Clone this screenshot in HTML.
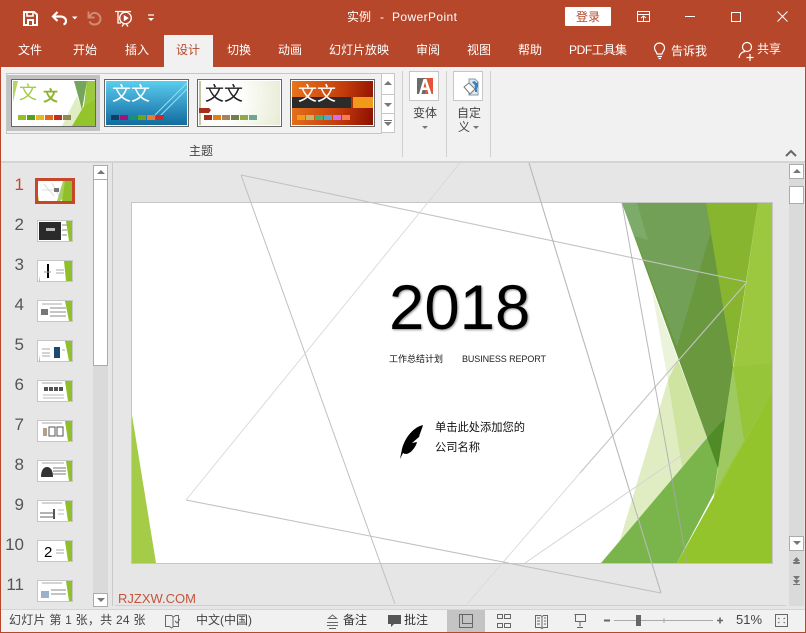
<!DOCTYPE html>
<html><head><meta charset="utf-8"><style>
html,body{margin:0;padding:0;width:806px;height:633px;overflow:hidden;background:#e6e6e6}
body{position:relative;font-family:"Liberation Sans","Noto Sans CJK SC",sans-serif;font-size:12px;color:#444}
div,span,svg{position:absolute}
.t{white-space:nowrap;line-height:16px;height:16px}
.w{color:#fff}
.n{font-size:17px;color:#555;line-height:20px;height:20px;width:24px;text-align:right;left:0}
.th{left:37px;width:34px;height:20px;background:#fff;border:1px solid #c6c6c6}
.g{top:79px;width:83px;height:46px;border:1px solid #666;overflow:hidden;box-shadow:inset 0 0 0 1px #fff}
.sw{height:5px;width:8px;top:115px}
.sb{background:#fff;border:1px solid #ababab;box-sizing:border-box}
.ar{width:0;height:0;border-left:4px solid transparent;border-right:4px solid transparent}
.gt{font-size:19px;line-height:24px;top:3px;left:7px;white-space:nowrap}
</style></head><body>
<div style="left:0;top:0;width:806px;height:67px;background:#b7472a"></div>
<div style="left:0;top:67px;width:806px;height:95px;background:#f1f1f1"></div>
<div style="left:0;top:161px;width:806px;height:2px;background:#d4d4d4"></div>
<div style="left:164px;top:35px;width:49px;height:32px;background:#f1f1f1"></div>

<svg style="left:0;top:0" width="170" height="34" fill="none" stroke="#fff">
<path d="M24 12h10l3 2.500V25H24z" stroke-width="2"/><path d="M27 12v4h6v-4" stroke-width="1.600"/><path d="M27 19h7v6h-7z" fill="#fff" stroke="none"/><path d="M29 21h3v4h-3z" fill="#b7472a" stroke="none"/>
<path d="M57.500 12l-4.500 4.500 4.500 4.500" stroke-width="2.200"/><path d="M53 16.500h7c4 0 6 2.200 6 4.500 0 1.800-1 3-2.500 3.500" stroke-width="2.200"/>
<path d="M72 16.500h5.500l-2.750 3z" fill="#fff" stroke="none"/>
<path d="M88.500 11.500v6h6" stroke="#d08a75" stroke-width="1.900" transform="translate(0,0)"/><path d="M89.500 17c1-3 3.500-4.500 6-4 3 .6 5 3 5 6 0 3-2.500 5.500-6 5.500-2 0-4-1-5-3" stroke="#d08a75" stroke-width="2"/>
<path d="M115 11.500h16M118 12v11h3M122 26.500l2-3M128 26.500l-2-3" stroke-width="1.300"/><circle cx="125.500" cy="18" r="5.800" stroke-width="1.300"/><path d="M123.800 15v6.200l5-3.100z" fill="#fff" stroke="none"/>
<path d="M148 15h6" stroke-width="1.200"/><path d="M148 18h6l-3 3z" fill="#fff" stroke="none"/>
</svg>
<span class="t w" style="left:347px;top:9px">实例</span><span class="t w" style="left:380px;top:9px">-</span><span class="t w" style="left:392px;top:9px;letter-spacing:.4px">PowerPoint</span>
<div style="left:565px;top:7px;width:46px;height:19px;background:#fff;border-radius:1px"></div>
<span class="t" style="left:576px;top:9px;color:#b7472a">登录</span>
<svg style="left:630px;top:5px" width="176" height="26" fill="none" stroke="#fff" stroke-width="1">
<path d="M7.500 6.500h12v10h-12zM7.500 9.500h12M13.500 16v-5M11 13l2.500-2 2.500 2"/>
<path d="M55 11.500h10"/><path d="M101.500 7.500h9v9h-9z"/><path d="M147.500 6.500l10 10M157.500 6.500l-10 10"/>
</svg>

<span class="t w" style="left:18px;top:42px">文件</span>
<span class="t w" style="left:73px;top:42px">开始</span>
<span class="t w" style="left:125px;top:42px">插入</span>
<span class="t" style="left:176px;top:42px;color:#b7472a">设计</span>
<span class="t w" style="left:227px;top:42px">切换</span>
<span class="t w" style="left:278px;top:42px">动画</span>
<span class="t w" style="left:329px;top:42px">幻灯片放映</span>
<span class="t w" style="left:416px;top:42px">审阅</span>
<span class="t w" style="left:467px;top:42px">视图</span>
<span class="t w" style="left:518px;top:42px">帮助</span>
<span class="t w" style="left:569px;top:42px;letter-spacing:-.4px">PDF工具集</span>
<span class="t w" style="left:671px;top:43px">告诉我</span>
<span class="t w" style="left:757px;top:41px">共享</span>
<svg style="left:650px;top:40px" width="130" height="22" fill="none" stroke="#fff" stroke-width="1.200">
<path d="M7 14c0-2-2.500-3-2.500-6a5 5 0 0 1 10 0c0 3-2.500 4-2.500 6zM7.500 16.500h4.500M8.500 18.500h2.500"/>
<circle cx="97" cy="7" r="4.500"/><path d="M89 18c.5-4 3-6 6-6.500M100 14v7M96.500 17.500h7"/>
</svg>

<!-- Theme gallery -->
<div style="left:6px;top:73px;width:374px;height:59px;border:1px solid #c6c6c6;background:#f1f1f1"></div>
<div style="left:7px;top:75px;width:93px;height:56px;background:#c2c2c2"></div>
<div class="g" style="left:11px;background:#fff">
<svg style="left:0;top:0" width="83" height="46"><path d="M1 1h5L1 22z" fill="#b4d468"/>
<path d="M65 16L74 40 60 46H50z" fill="#e0edc3"/>
<path d="M62 1H75L70 30z" fill="#74a55a"/>
<path d="M75 1H83V46H60L72 26z" fill="#93c42b"/><path d="M76 1H83V20L72 26z" fill="#9dc93f"/></svg>
<span style="left:7px;top:2px;font-size:18px;line-height:22px;color:#a4cc48">文</span><span style="left:31px;top:7px;font-size:15px;line-height:20px;color:#8ab52a;font-weight:700">文</span></div>
<div class="g" style="left:104px;background:linear-gradient(180deg,#5cd0ee 0,#3aa0cc 45%,#0f6a9c 100%)">
<svg style="left:0;top:0" width="83" height="46"><path d="M50 35L82 3M54 37L82 9" stroke="#9fdcee" stroke-width="1"/></svg>
<span class="gt" style="color:#fff">文文</span></div>
<div class="g" style="left:197px;background:radial-gradient(circle at 25% 40%,#fff 0,#fff 30%,#e6ebd2 100%)">
<svg style="left:0;top:0" width="83" height="46"><path d="M2 1v44" stroke="#c3c8a5" stroke-width="2"/><path d="M1 28h10l2 2-2 3H1z" fill="#a5301a"/></svg>
<span class="gt" style="color:#222">文文</span></div>
<div class="g" style="left:290px;background:linear-gradient(100deg,#e9761c 0,#c33c0c 60%,#8a0d00 100%)">
<div style="left:1px;top:17px;width:59px;height:11px;background:#2b2b2b"></div><div style="left:62px;top:17px;width:20px;height:11px;background:#f09a1a"></div>
<span class="gt" style="color:#fff">文文</span></div>

<div class="sw" style="left:18px;background:#93c11f"></div><div class="sw" style="left:27px;background:#54a021"></div><div class="sw" style="left:36px;background:#e6b91e"></div><div class="sw" style="left:45px;background:#e76618"></div><div class="sw" style="left:54px;background:#c42f1a"></div><div class="sw" style="left:63px;background:#918655"></div>
<div class="sw" style="left:111px;background:#0f3b68"></div><div class="sw" style="left:120px;background:#a4127f"></div><div class="sw" style="left:129px;background:#159079"></div><div class="sw" style="left:138px;background:#6ea31c"></div><div class="sw" style="left:147px;background:#e97b35"></div><div class="sw" style="left:156px;background:#ce2a2a"></div>
<div class="sw" style="left:204px;background:#a5301a"></div><div class="sw" style="left:213px;background:#e07e1a"></div><div class="sw" style="left:222px;background:#a5845a"></div><div class="sw" style="left:231px;background:#708050"></div><div class="sw" style="left:240px;background:#92a84a"></div><div class="sw" style="left:249px;background:#6aa88f"></div>
<div class="sw" style="left:297px;background:#f09a1a"></div><div class="sw" style="left:306px;background:#c4b36a"></div><div class="sw" style="left:315px;background:#4aaf6a"></div><div class="sw" style="left:324px;background:#5aa0c8"></div><div class="sw" style="left:333px;background:#d070e8"></div><div class="sw" style="left:342px;background:#ff7a50"></div>

<div class="sb" style="left:381px;top:73px;width:14px;height:22px;border-color:#c6c6c6;background:#fff"></div>
<div class="sb" style="left:381px;top:94px;width:14px;height:20px;border-color:#c6c6c6;background:#fff"></div>
<div class="sb" style="left:381px;top:113px;width:14px;height:20px;border-color:#c6c6c6;background:#fff"></div>
<div class="ar" style="left:384px;top:81px;border-bottom:4px solid #777"></div>
<div class="ar" style="left:384px;top:103px;border-top:4px solid #777"></div>
<div style="left:384px;top:120px;width:8px;height:1px;background:#777"></div>
<div class="ar" style="left:384px;top:122px;border-top:4px solid #777"></div>
<span class="t" style="left:189px;top:143px;color:#444">主题</span>

<div style="left:402px;top:71px;width:1px;height:86px;background:#d0d0d0"></div>
<div style="left:446px;top:71px;width:1px;height:86px;background:#d0d0d0"></div>
<div style="left:490px;top:71px;width:1px;height:86px;background:#d0d0d0"></div>
<div style="left:409px;top:71px;width:28px;height:28px;background:#fff;border:1px solid #c6c6c6"></div>
<div style="left:453px;top:71px;width:28px;height:28px;background:#fff;border:1px solid #c6c6c6"></div>
<svg style="left:409px;top:71px" width="80" height="30">
<path d="M8 7h8v16H8z" fill="#6a6a6a"/><path d="M16 7h8v16h-8z" fill="#e2553a"/>
<path d="M10 23L14.500 8h3L22.500 23h-3l-1-4h-5l-1 4z" fill="#fff"/><path d="M14.500 16.500h3L16 11z" fill="#e2553a"/>
<path d="M60 8h6l3 3v13h-9z" fill="#dde7f0" stroke="#8a9aaa"/>
<path d="M55 16l5-4 6 6-5 5z" fill="#fff" stroke="#777"/>
<path d="M63 11l3.500 4-1.500 1 4 .5V11l-1.500 1-2-2z" fill="#3a7fc4"/>
<path d="M67 12v9" stroke="#3a7fc4" stroke-width="2"/>
</svg>
<span class="t" style="left:413px;top:105px">变体</span>
<div class="ar" style="left:422px;top:126px;border-left-width:3px;border-right-width:3px;border-top:3px solid #777"></div>
<span class="t" style="left:457px;top:105px">自定</span>
<span class="t" style="left:458px;top:119px">义</span>
<div class="ar" style="left:473px;top:126px;border-left-width:3px;border-right-width:3px;border-top:3px solid #777"></div>
<svg style="left:784px;top:147px" width="14" height="12" fill="none" stroke="#666" stroke-width="2"><path d="M2 9l5-5 5 5"/></svg>

<!-- Thumbnail pane -->
<div style="left:93px;top:165px;width:15px;height:442px;background:#dadada"></div>
<div class="sb" style="left:93px;top:165px;width:15px;height:15px"></div>
<div class="ar" style="left:97px;top:170px;border-bottom:4px solid #777"></div>
<div class="sb" style="left:93px;top:179px;width:15px;height:187px"></div>
<div class="sb" style="left:93px;top:593px;width:15px;height:14px"></div>
<div class="ar" style="left:97px;top:598px;border-top:4px solid #777"></div>
<div style="left:112px;top:163px;width:1px;height:443px;background:#c8c8c8"></div>

<span class="t n" style="top:175px;color:#c8472a">1</span>
<span class="t n" style="top:215px">2</span><span class="t n" style="top:255px">3</span><span class="t n" style="top:295px">4</span><span class="t n" style="top:335px">5</span><span class="t n" style="top:375px">6</span><span class="t n" style="top:415px">7</span><span class="t n" style="top:455px">8</span><span class="t n" style="top:495px">9</span><span class="t n" style="top:535px">10</span><span class="t n" style="top:575px">11</span>

<div style="left:35px;top:178px;width:34px;height:20px;border:3px solid #c8472a;background:#fff"></div>
<svg style="left:38px;top:181px" width="34" height="20"><path d="M6 3l10 12M14 2l8 15M4 9h18" stroke="#ddd"/><path d="M16 7h5v4h-5z" fill="#777"/><path d="M25 0h6v12l-9 8h-3z" fill="#a8cf62"/><path d="M27 0h7v20H24z" fill="#8fc02b"/><path d="M0 14v6h1z" fill="#9cc63d"/></svg>
<div class="th" style="top:220px"><svg style="left:0;top:0" width="34" height="20"><path d="M1 1h22v18H1z" fill="#2a2a2a"/><path d="M8 7h9v3H8z" fill="#bbb"/><path d="M24 4h5M24 9h5M24 14h5" stroke="#888"/><path d="M28 0h6v20h-3z" fill="#8fc02b"/></svg></div>
<div class="th" style="top:260px"><svg style="left:0;top:0" width="34" height="20"><path d="M10 3v14" stroke="#000" stroke-width="2"/><path d="M6 11h7" stroke="#999"/><path d="M18 9h8M18 12h8" stroke="#aaa"/><path d="M26 0h8v20h-6z" fill="#8fc02b"/><path d="M1 15v5h1z" fill="#9cc63d"/></svg></div>
<div class="th" style="top:300px"><svg style="left:0;top:0" width="34" height="20"><path d="M3 8h7v6H3z" fill="#777"/><path d="M12 7h16M12 11h16M12 15h16" stroke="#888"/><path d="M4 3h20" stroke="#aaa"/><path d="M27 0h7v20h-3z" fill="#8fc02b"/></svg></div>
<div class="th" style="top:340px"><svg style="left:0;top:0" width="34" height="20"><path d="M16 6h6v11h-6z" fill="#1d4a70"/><path d="M4 8h8M4 12h8M4 15h8M24 9h3" stroke="#aaa"/><path d="M27 0h7v20h-3z" fill="#8fc02b"/><path d="M1 14v6h1z" fill="#9cc63d"/></svg></div>
<div class="th" style="top:380px"><svg style="left:0;top:0" width="34" height="20"><path d="M6 6h4v4H6zM11 6h4v4h-4zM16 6h4v4h-4zM21 6h4v4h-4z" fill="#555"/><path d="M5 14h21M5 17h21" stroke="#bbb"/><path d="M4 2h20" stroke="#aaa"/><path d="M27 0h7v20h-4z" fill="#8fc02b"/></svg></div>
<div class="th" style="top:420px"><svg style="left:0;top:0" width="34" height="20" fill="none"><path d="M11 6h6v9h-6zM19 6h6v9h-6z" stroke="#555"/><path d="M5 7h4v8H5z" fill="#b0a090"/><path d="M4 2h20" stroke="#aaa"/><path d="M27 0h7v20h-4z" fill="#8fc02b"/></svg></div>
<div class="th" style="top:460px"><svg style="left:0;top:0" width="34" height="20"><path d="M3 16c0-6 2-10 6-10s6 4 6 10z" fill="#333"/><path d="M15 7h13M15 10h13M15 13h13" stroke="#777"/><path d="M4 2h22" stroke="#aaa"/><path d="M28 0h6v20h-3z" fill="#8fc02b"/></svg></div>
<div class="th" style="top:500px"><svg style="left:0;top:0" width="34" height="20"><path d="M2 12h14M2 16h14" stroke="#666"/><path d="M16 8v10" stroke="#555" stroke-width="2"/><path d="M20 9h6M20 13h6" stroke="#bbb"/><path d="M4 2h20" stroke="#aaa"/><path d="M27 0h7v20h-4z" fill="#8fc02b"/></svg></div>
<div class="th" style="top:540px"><svg style="left:0;top:0" width="34" height="20"><text x="6" y="16" font-size="15" font-family="Liberation Sans" fill="#000">2</text><path d="M18 9h8M18 12h8" stroke="#aaa"/><path d="M27 0h7v20h-4z" fill="#8fc02b"/></svg></div>
<div class="th" style="top:580px"><svg style="left:0;top:0" width="34" height="20"><path d="M3 10h8v7H3z" fill="#9bb0cc"/><path d="M13 9h15M13 13h15" stroke="#888"/><path d="M4 2h20" stroke="#aaa"/><path d="M28 0h6v20h-3z" fill="#8fc02b"/></svg></div>

<!-- Slide -->
<div style="left:131px;top:202px;width:640px;height:360px;background:#fff;border:1px solid #c6c6c6"></div>
<svg style="left:0;top:0" width="806" height="633" fill="none">
<path d="M132 415L132 563H156z" fill="#a4cc48"/>
<path d="M758 203H772V563H704z" fill="#9bc83f"/>
<path d="M706 203H758L733 367 718 468z" fill="#87b52f"/>
<path d="M652 290L668 380 613 563H672L707 438z" fill="#e0edc3"/>
<path d="M652 290L668 380 678 360z" fill="#ebf3da"/>
<path d="M668 380L678 360 707 438 682 467z" fill="#cfe4a0"/>
<path d="M622 203H706L733 367 718 468z" fill="#6a983f"/>
<path d="M622 203H706L710.500 233 677 347z" fill="#72a056"/>
<path d="M622 203H637L648 240 634 236z" fill="#7cab6a"/>
<path d="M601 563L707 438 725 418 714 493 677 563z" fill="#7ab54c"/>
<path d="M707 438L725 418 718 468z" fill="#4f8c27"/>
<path d="M677 563L772 393V563z" fill="#93c42b"/>
<path d="M733 367L772 363V393L744 440z" fill="#97c53a"/>
<path d="M733 367L744 440 714 493 718 468z" fill="#9fca62"/>
<path d="M241 175L747 282" stroke="#c3c3c3" stroke-width="1.100"/>
<path d="M747 282L580 473" stroke="#c3c3c3" stroke-width="1.100"/>
<path d="M580 473L467 604" stroke="#dcdcdc" stroke-width="1"/>
<path d="M241 175L395 604" stroke="#c0c0c0" stroke-width="1"/>
<path d="M460 163L186 500" stroke="#d8d8d8" stroke-width=".9"/>
<path d="M186 500L661 593" stroke="#c0c0c0" stroke-width="1.100"/>
<path d="M529 163L661 593" stroke="#b8b8b8" stroke-width="1.100"/>
<path d="M622 203L687 563" stroke="#a8a8a8" stroke-opacity=".8"/>
<path d="M707 438L525 563" stroke="#d4d4d4"/>
<path d="M115 605.500H786" stroke="#cfcfcf"/>
<path d="M423 425C414 427 405 437 402 449L400 459L403 453C409 457 416 447 417 442L412 443 419 437C420 433 422 429 423 425Z" fill="#000"/>
</svg>
<div style="left:389px;top:271px;font-size:63.500px;line-height:75px;color:#000;white-space:nowrap;text-shadow:1px 1px 2px rgba(0,0,0,.45)">2018</div>
<span class="t" style="left:389px;top:351px;font-size:9px;color:#111">工作总结计划</span>
<span class="t" style="left:462px;top:351px;font-size:9px;color:#222;letter-spacing:-.1px">BUSINESS REPORT</span>
<span class="t" style="left:435px;top:420px;font-size:11.250px;color:#111">单击此处添加您的</span>
<span class="t" style="left:435px;top:440px;font-size:11.250px;color:#111">公司名称</span>

<!-- Right scrollbar -->
<div style="left:789px;top:163px;width:15px;height:443px;background:#dadada"></div>
<div class="sb" style="left:789px;top:164px;width:15px;height:15px"></div>
<div class="ar" style="left:793px;top:169px;border-bottom:4px solid #777"></div>
<div class="sb" style="left:789px;top:186px;width:15px;height:18px"></div>
<div class="sb" style="left:789px;top:536px;width:15px;height:15px"></div>
<div class="ar" style="left:793px;top:541px;border-top:4px solid #777"></div>
<svg style="left:789px;top:554px" width="15" height="36" fill="#777"><path d="M7.500 3l3.500 4H4zM4 8h7v1H4zM7.500 6l3.500 4H4z"/><path d="M4 22h7l-3.500 4zM4 26h7l-3.500 4zM4 30h7v1H4z"/></svg>

<span style="left:118px;top:591px;font-size:13px;line-height:16px;color:#c2553c;white-space:nowrap">RJZXW.COM</span>

<!-- Status -->
<div style="left:0;top:610px;width:806px;height:22px;background:#f1f1f1"></div>
<div style="left:0;top:609px;width:806px;height:1px;background:#d4d4d4"></div>
<span class="t" style="left:9px;top:612px;letter-spacing:.25px">幻灯片 第 1 张，共 24 张</span>
<span class="t" style="left:196px;top:612px">中文(中国)</span>
<span class="t" style="left:343px;top:612px;color:#333">备注</span>
<span class="t" style="left:404px;top:612px;color:#333">批注</span>
<span class="t" style="left:736px;top:612px;font-size:13px">51%</span>
<div style="left:447px;top:610px;width:38px;height:22px;background:#c4c4c4"></div>
<svg style="left:0;top:610px" width="806" height="22" fill="none" stroke="#666">
<path d="M165.500 5.500h6l2 1.500 2-1.500h3v11h-5l-2 1.500-2-1.500h-4zM173 7v10M175 11l2 2 3-4"/>
<path d="M327 15.500h11M327 12.500h11M332.500 5l4 3.500h-8zM329 18.500h7"/>
<path d="M388 5h13v9h-7l-3 3v-3h-3z" fill="#555" stroke="none"/>
<path d="M459.500 4.500h13v13h-13zM462.500 4.500v9h10"/>
<path d="M497.500 4.500h5v4h-5zM504.500 4.500h6v4h-6zM497.500 13.500h5v4h-5zM504.500 13.500h6v4h-6z"/>
<path d="M535.500 5.500h5l1.500 1 1.500-1h4v12h-4l-1.500 1-1.500-1h-5zM542 6v12M537 8h3M537 11h3M537 14h3M544 8h2M544 11h2M544 14h2"/>
<path d="M574.500 4.500h11M575.500 4.500v7h10v-7M580 11.500v5M577 17.500h6"/>
<path d="M604 10.500h6" stroke-width="2"/>
<path d="M614 10.500h99M664 8v5" stroke="#aaa"/>
<path d="M717 10.500h6M720 7.500v6" stroke-width="1.600"/>
<path d="M775.500 4.500h12v12h-12zM778 8l1.500 1M785 8l-1.500 1M778 13l1.500-1M785 13l-1.500-1" stroke-width="1"/>
</svg>
<div style="left:636px;top:615px;width:5px;height:11px;background:#666"></div>

<!-- Window frame -->
<div style="left:0;top:0;width:1px;height:633px;background:#b7472a"></div>
<div style="left:805px;top:0;width:1px;height:633px;background:#b7472a"></div>
<div style="left:0;top:632px;width:806px;height:1px;background:#b7472a"></div>
</body></html>
